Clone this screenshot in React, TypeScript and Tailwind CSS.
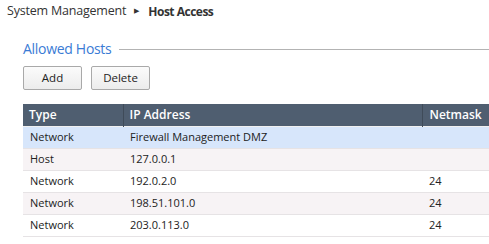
import React from "react";

type HostRow = {
  type: string;
  address: string;
  netmask: string;
};

const hosts: HostRow[] = [
  { type: "Network", address: "Firewall Management DMZ", netmask: "" },
  { type: "Host", address: "127.0.0.1", netmask: "" },
  { type: "Network", address: "192.0.2.0", netmask: "24" },
  { type: "Network", address: "198.51.101.0", netmask: "24" },
  { type: "Network", address: "203.0.113.0", netmask: "24" },
];

const rowTone = ["bg-[#d7e6fb]", "bg-[#f7f3f5]", "bg-white", "bg-[#f7f3f5]", "bg-white"];

export default function App() {
  return (
    <div className="h-[244px] w-[489px] overflow-hidden bg-white font-['Open_Sans','Noto_Sans',sans-serif] text-[12px] text-[#222]">
      <div className="flex h-[22px] items-center pl-[7px] pt-[1px]">
        <span className="text-[12.5px] tracking-[-0.2px] text-[#333]">System Management</span>
        <span className="ml-[8px] mr-[9px] text-[7px] text-[#333]">&#9654;</span>
        <span className="text-[12px] font-bold tracking-[-0.5px] text-[#333]">Host Access</span>
      </div>

      <div className="pl-[23px]">
        <div className="mt-[17px] flex items-center">
          <span className="text-[14px] leading-[20px] tracking-[-0.3px] text-[#3a7bd5]">Allowed Hosts</span>
          <div className="ml-[8px] h-px flex-1 bg-[#b3b3b3]" />
        </div>

        <div className="mt-[7px] flex gap-[9px]">
          <button className="h-[24px] w-[59px] rounded-[2px] border border-[#a9a9a9] bg-gradient-to-b from-[#fbfbfb] to-[#ececec] text-[11.5px] text-[#222]">
            Add
          </button>
          <button className="h-[24px] w-[59px] rounded-[2px] border border-[#a9a9a9] bg-gradient-to-b from-[#fbfbfb] to-[#ececec] text-[11.5px] text-[#222]">
            Delete
          </button>
        </div>

        <table className="mt-[14px] w-full border-collapse text-left">
          <thead>
            <tr className="h-[22px] bg-[#4f5e70] text-white">
              <th className="w-[100px] border-r border-[#3f4b59] pl-[6px] font-semibold">Type</th>
              <th className="border-r border-[#3f4b59] pl-[6px] font-semibold">IP Address</th>
              <th className="w-[67px] pl-[7px] font-semibold">Netmask</th>
            </tr>
          </thead>
          <tbody className="text-[11px]">
            {hosts.map((host, index) => (
              <tr
                key={host.address}
                className={`h-[22px] border-b border-[#e6e3e5] ${rowTone[index]} ${index === 0 ? "border-t border-t-[#f0f0f0]" : ""}`}
              >
                <td className="pl-[7px]">{host.type}</td>
                <td className="pl-[7px]">{host.address}</td>
                <td className="pl-[7px]">{host.netmask}</td>
              </tr>
            ))}
          </tbody>
        </table>
      </div>
    </div>
  );
}
